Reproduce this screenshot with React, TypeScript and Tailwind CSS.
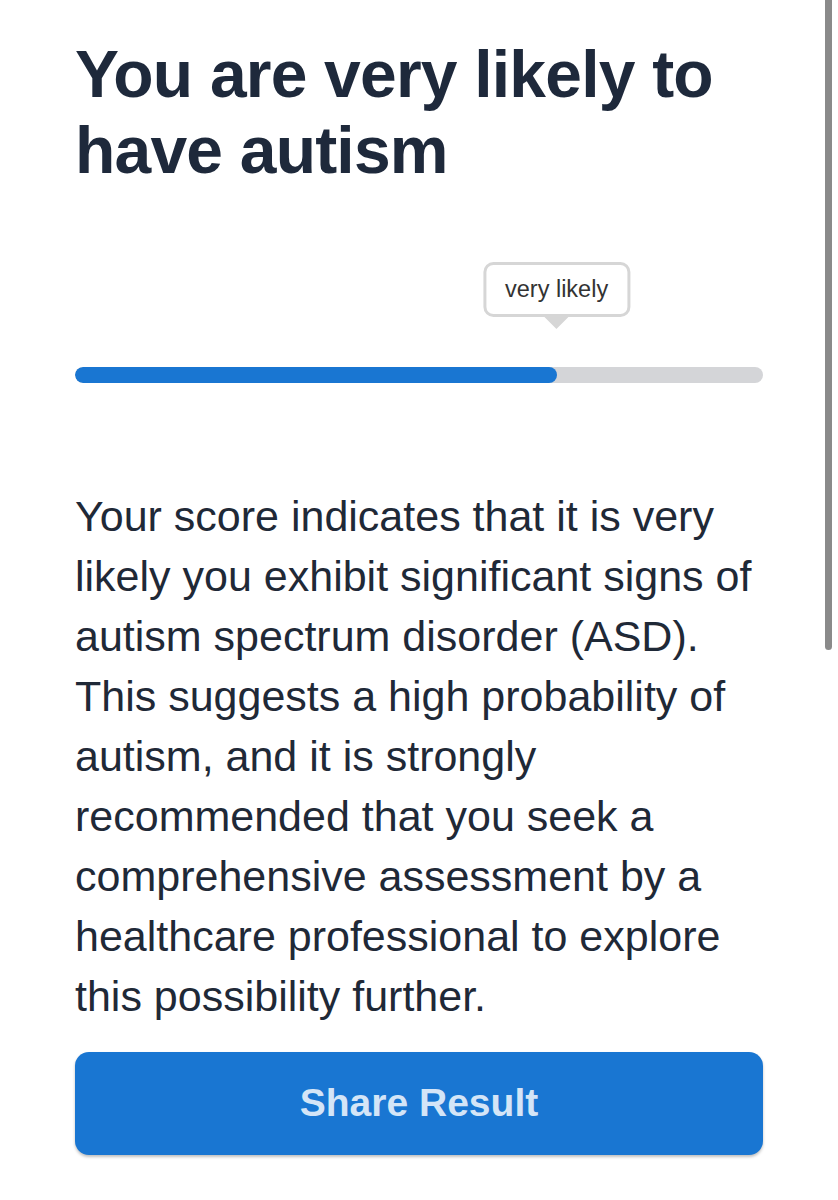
export default function App() {
  return (
    <div className="relative min-h-[1200px] bg-white" style={{ fontFamily: '"Liberation Sans", Arial, sans-serif' }}>
      <div className="absolute right-[6px] top-0 h-[650px] w-[7px] rounded-b-full bg-[#8a8a8a]" />
      <div className="px-[75px] pt-[36px]">
        <h1 className="text-[66px] font-bold leading-[76px] tracking-[-0.8px] text-[#1e293b]">
          You are very likely to have autism
        </h1>
        <div className="relative mt-[179px]">
          <div className="absolute bottom-[66px] left-[70%] -translate-x-1/2">
            <div className="relative rounded-[10px] border-[3px] border-[#d6d6d6] bg-white px-[19px] py-[12px] text-[23.5px] leading-[25px] text-[#333333] whitespace-nowrap">
              very likely
            </div>
            <div className="absolute left-1/2 top-full -translate-x-1/2 h-0 w-0 border-x-[12px] border-t-[12px] border-x-transparent border-t-[#d6d6d6]" />
          </div>
          <div className="h-[16px] w-full overflow-hidden rounded-full bg-[#d4d5d8]">
            <div className="h-full w-[70%] rounded-full bg-[#1976d2]" />
          </div>
        </div>
        <p className="mt-[103px] text-[43px] leading-[60px] text-[#1f2937]">
          Your score indicates that it is very likely you exhibit significant signs of autism spectrum disorder (ASD). This suggests a high probability of autism, and it is strongly recommended that you seek a comprehensive assessment by a healthcare professional to explore this possibility further.
        </p>
        <button className="mt-[26px] flex h-[103px] w-full items-center justify-center rounded-[14px] bg-[#1976d2] text-[39px] font-bold text-[#d4e5f7] shadow-[0_2px_3px_rgba(0,0,0,0.25)]">
          Share Result
        </button>
      </div>
    </div>
  );
}
